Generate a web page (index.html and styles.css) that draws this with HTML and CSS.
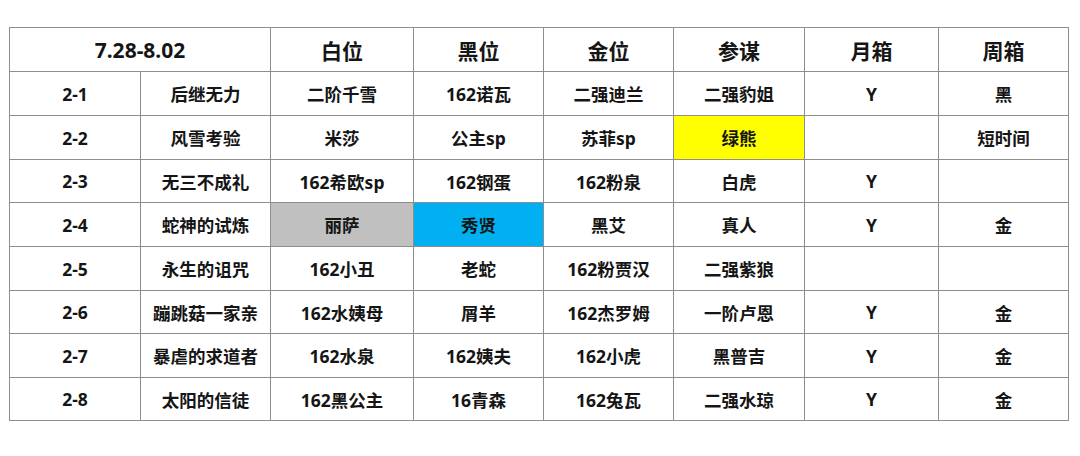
FILE: index.html
```html
<!DOCTYPE html>
<html lang="zh">
<head>
<meta charset="utf-8">
<link rel="stylesheet" href="styles.css">
</head>
<body>
<div class="page">
<table class="sheet">
<colgroup>
<col class="c1"><col class="c2"><col class="c3"><col class="c4"><col class="c5"><col class="c6"><col class="c7"><col class="c8">
</colgroup>
<thead>
<tr class="head"><th colspan="2">7.28-8.02</th><th>白位</th><th>黑位</th><th>金位</th><th>参谋</th><th>月箱</th><th>周箱</th></tr>
</thead>
<tbody>
<tr class="r44"><td>2-1</td><td>后继无力</td><td>二阶千雪</td><td>162诺瓦</td><td>二强迪兰</td><td>二强豹姐</td><td>Y</td><td>黑</td></tr>
<tr class="r44"><td>2-2</td><td>风雪考验</td><td>米莎</td><td>公主sp</td><td>苏菲sp</td><td class="yellow">绿熊</td><td></td><td>短时间</td></tr>
<tr class="r43"><td>2-3</td><td>无三不成礼</td><td>162希欧sp</td><td>162钢蛋</td><td>162粉泉</td><td>白虎</td><td>Y</td><td></td></tr>
<tr class="r44"><td>2-4</td><td>蛇神的试炼</td><td class="gray">丽萨</td><td class="blue">秀贤</td><td>黑艾</td><td>真人</td><td>Y</td><td>金</td></tr>
<tr class="r44"><td>2-5</td><td>永生的诅咒</td><td>162小丑</td><td>老蛇</td><td>162粉贾汉</td><td>二强紫狼</td><td></td><td></td></tr>
<tr class="r43"><td>2-6</td><td>蹦跳菇一家亲</td><td>162水姨母</td><td>屑羊</td><td>162杰罗姆</td><td>一阶卢恩</td><td>Y</td><td>金</td></tr>
<tr class="r44"><td>2-7</td><td>暴虐的求道者</td><td>162水泉</td><td>162姨夫</td><td>162小虎</td><td>黑普吉</td><td>Y</td><td>金</td></tr>
<tr class="r43"><td>2-8</td><td>太阳的信徒</td><td>162黑公主</td><td>16青森</td><td>162兔瓦</td><td>二强水琼</td><td>Y</td><td>金</td></tr>
</tbody>
</table>
</div>
</body>
</html>
```
FILE: styles.css
```css
html, body {
  margin: 0;
  padding: 0;
  background: #ffffff;
}
.page {
  padding: 27px 0 0 9px;
}
.sheet {
  border-collapse: collapse;
  table-layout: fixed;
  width: 1059px;
  font-family: "Noto Sans", "Noto Sans CJK SC", sans-serif;
  color: #151515;
}
.c1 { width: 131px; }
.c2 { width: 130px; }
.c3 { width: 143px; }
.c4 { width: 130px; }
.c5 { width: 130px; }
.c6 { width: 131px; }
.c7 { width: 134px; }
.c8 { width: 130px; }
.sheet th, .sheet td {
  border: 1px solid #8e8e8e;
  padding: 0;
  text-align: center;
  vertical-align: middle;
  font-weight: 700;
  white-space: nowrap;
}
.sheet th {
  font-size: 21px;
}
.sheet td {
  font-size: 17.5px;
}
.head { height: 44px; }
.r44 { height: 44px; }
.r43 { height: 43px; }
.yellow { background: #ffff00; }
.gray { background: #c0c0c0; }
.blue { background: #00b0f0; }
```
